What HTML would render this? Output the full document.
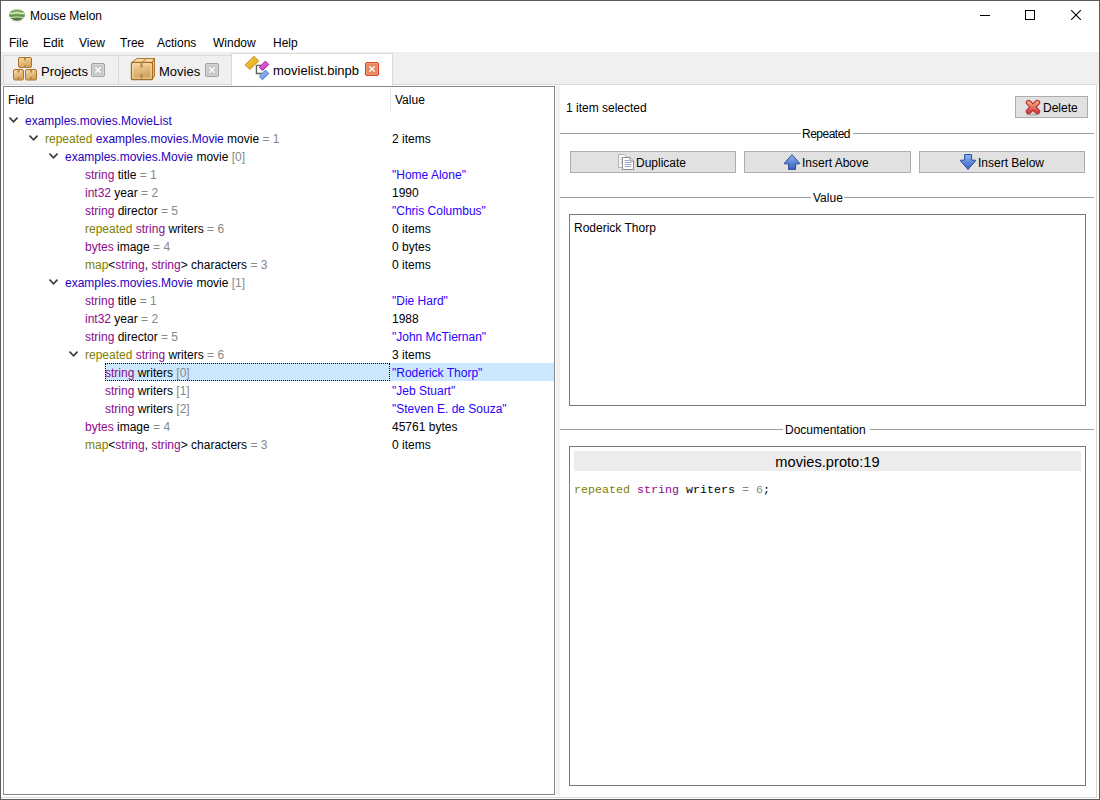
<!DOCTYPE html>
<html><head><meta charset="utf-8">
<style>
*{box-sizing:border-box;margin:0;padding:0}
html,body{width:1100px;height:800px;overflow:hidden;background:#fff}
body{font-family:"Liberation Sans",sans-serif;font-size:12px;color:#000;position:relative}
.a{position:absolute}
.t{position:absolute;white-space:pre;line-height:20px;height:18px}
#win{position:absolute;left:0;top:0;width:1100px;height:800px;border:1px solid #5c5c5c;background:#fff}
#tabbar{position:absolute;left:1px;top:52px;width:1098px;height:33px;background:#f0f0f0}
.tab{position:absolute;top:55px;height:29px;background:#f0f0f0;border:1px solid #d9d9d9;border-bottom:none}
.tab.act{top:53px;height:33px;background:#fff}
.cls{position:absolute;width:14px;height:14px;border:1px solid #a2a2a2;background:#c9c9c9;border-radius:2px;box-shadow:inset 0 0 0 1px #d4d4d4}
.pane{position:absolute;left:1px;top:84px;width:1096px;height:714px;border:1px solid #d9d9d9;border-left:none;background:#fff}
#tree{position:absolute;left:3px;top:86px;width:552px;height:709px;border:1px solid #828790;background:#fff;overflow:hidden}
.row{position:absolute;left:0;width:550px;height:18px}
.ty{color:#2800c0}
.kw{color:#808000}
.pr{color:#8b0b8b}
.gr{color:#888}
.sv{color:#2a00ff}
.btn{position:absolute;border:1px solid #adadad;background:#e1e1e1;height:22px}
.sep{position:absolute;height:1px;background:#a0a0a0}
.box{position:absolute;border:1px solid #7a7a7a;background:#fff}
</style></head><body>
<div id="win"></div>
<!-- title bar -->
<svg class="a" style="left:8px;top:8px" width="18" height="14" viewBox="0 0 18 14">
  <defs><linearGradient id="mg" x1="0" y1="0" x2="0" y2="1"><stop offset="0" stop-color="#b4d49a"/><stop offset="0.45" stop-color="#8ab86a"/><stop offset="1" stop-color="#3c6428"/></linearGradient></defs>
  <ellipse cx="9" cy="12.2" rx="5" ry="1.2" fill="#909090" opacity="0.5"/>
  <ellipse cx="9" cy="6.8" rx="8" ry="5.7" fill="url(#mg)"/>
  <path d="M3 3.6 Q9 1.8 15 3.6" stroke="#5c8c40" stroke-width="0.9" fill="none"/>
  <path d="M1.8 5.6 Q9 3.8 16.2 5.6" stroke="#e6f2dc" stroke-width="1" fill="none"/>
  <path d="M1.4 7.8 Q9 6.2 16.6 7.8" stroke="#5a8a3c" stroke-width="0.9" fill="none"/>
  <path d="M2.2 9.6 Q9 8.2 15.8 9.6" stroke="#d8ead0" stroke-width="0.9" fill="none"/>
</svg>
<div class="t" style="left:30px;top:6px">Mouse Melon</div>
<div class="a" style="left:980px;top:15px;width:10px;height:1px;background:#000"></div>
<div class="a" style="left:1025px;top:10px;width:10px;height:10px;border:1px solid #000"></div>
<svg class="a" style="left:1071px;top:10px" width="10" height="10" viewBox="0 0 10 10"><path d="M0 0L10 10M10 0L0 10" stroke="#000" stroke-width="1.1"/></svg>
<!-- menu -->
<div class="t" style="left:9px;top:33px">File</div>
<div class="t" style="left:43px;top:33px">Edit</div>
<div class="t" style="left:79px;top:33px">View</div>
<div class="t" style="left:120px;top:33px">Tree</div>
<div class="t" style="left:157px;top:33px">Actions</div>
<div class="t" style="left:213px;top:33px">Window</div>
<div class="t" style="left:273px;top:33px">Help</div>
<!-- tab bar -->
<div id="tabbar"></div>
<div class="pane"></div>
<div class="tab" style="left:3px;width:116px"></div>
<div class="tab" style="left:118px;width:114px"></div>
<div class="tab act" style="left:231px;width:162px"></div>
<div class="t" style="left:41px;top:62px;font-size:13px">Projects</div>
<div class="cls" style="left:91px;top:63px"><svg class="a" style="left:3px;top:3px" width="6" height="6"><path d="M0.3 0.3L5.7 5.7M5.7 0.3L0.3 5.7" stroke="#fff" stroke-width="1.4"/></svg></div>
<div class="t" style="left:159px;top:62px;font-size:13px">Movies</div>
<div class="cls" style="left:205px;top:63px"><svg class="a" style="left:3px;top:3px" width="6" height="6"><path d="M0.3 0.3L5.7 5.7M5.7 0.3L0.3 5.7" stroke="#fff" stroke-width="1.4"/></svg></div>
<div class="t" style="left:273px;top:61px;font-size:13px">movielist.binpb</div>
<div class="cls" style="left:365px;top:62px;border-color:#dc3c28;background:#e9885e;box-shadow:inset 0 0 0 1px #eba07c"><svg class="a" style="left:3px;top:3px" width="6" height="6"><path d="M0.3 0.3L5.7 5.7M5.7 0.3L0.3 5.7" stroke="#fff" stroke-width="1.4"/></svg></div>


<svg class="a" style="left:12px;top:56px" width="26" height="25" viewBox="0 0 26 25">
 <defs><linearGradient id="bx" x1="0" y1="0" x2="0.3" y2="1"><stop offset="0" stop-color="#fbdca8"/><stop offset="1" stop-color="#d4a460"/></linearGradient></defs>
 <rect x="6.5" y="1.5" width="13" height="10" rx="1.5" fill="url(#bx)" stroke="#a8742c"/>
 <rect x="1.5" y="13.5" width="10" height="10.5" rx="1.5" fill="url(#bx)" stroke="#a8742c"/>
 <rect x="13.5" y="13.5" width="11" height="10.5" rx="1.5" fill="url(#bx)" stroke="#a8742c"/>
 <path d="M13 2v2.5M13 9v2.5M6.5 14v2.5M6.5 21v2.5M19 14v2.5M19 21v2.5" stroke="#b58a4a" stroke-width="2"/>
</svg>
<svg class="a" style="left:130px;top:57px" width="27" height="24" viewBox="0 0 27 24">
 <defs><linearGradient id="bx2" x1="0" y1="0" x2="0.3" y2="1"><stop offset="0" stop-color="#fad8a2"/><stop offset="1" stop-color="#d1a05c"/></linearGradient></defs>
 <path d="M1.5 5.5L7 1.5H24.5L22 5.5Z" fill="#f8dcae" stroke="#b07424"/>
 <path d="M22 5.5L24.5 1.5V19L22 22.5Z" fill="#f0cf9c" stroke="#b07424"/>
 <rect x="1.5" y="5.5" width="21" height="17" rx="1" fill="url(#bx2)" stroke="#a86c1c" stroke-width="1.4"/>
 <path d="M2.8 6.8h18.4v14.4H2.8z" fill="none" stroke="#fff2dc" stroke-width="0.9" opacity="0.8"/>
 <path d="M11.5 6v4.5M11.5 17v4.5" stroke="#b08850" stroke-width="2.2"/>
 <path d="M11 5.5L17 1.5" stroke="#c89858" stroke-width="1.5"/>
</svg>
<svg class="a" style="left:242px;top:54px" width="30" height="30" viewBox="0 0 30 30">
 <defs>
  <linearGradient id="yl" x1="0" y1="0" x2="1" y2="1"><stop offset="0" stop-color="#f8d050"/><stop offset="1" stop-color="#e0a010"/></linearGradient>
  <linearGradient id="mg2" x1="0" y1="0" x2="1" y2="1"><stop offset="0" stop-color="#f070e8"/><stop offset="1" stop-color="#c830b8"/></linearGradient>
  <linearGradient id="bl" x1="0" y1="0" x2="1" y2="1"><stop offset="0" stop-color="#a8c8f8"/><stop offset="1" stop-color="#5a88d8"/></linearGradient>
 </defs>
 <path d="M14.4 11.3V19.5H20M14.4 11.3H19" stroke="#5c5c5c" stroke-width="1.3" fill="none"/>
 <path d="M12 2.3L16.7 6.9L7.9 15.4L3.2 10.9Z" fill="url(#yl)" stroke="#c88a10" stroke-width="1"/>
 <path d="M23.4 7.1L26.8 10.5L20.4 16.5L17.2 13.3Z" fill="url(#mg2)" stroke="#a02090" stroke-width="1"/>
 <path d="M23.4 16.1L26.8 19.5L20.4 25.7L17.2 22.5Z" fill="url(#bl)" stroke="#4a78c8" stroke-width="1"/>
</svg>

<!-- tree -->
<div id="tree">
  <div class="t" style="left:4px;top:3px">Field</div>
  <div class="a" style="left:386px;top:0;width:1px;height:24px;background:#e5e5e5"></div>
  <div class="t" style="left:391px;top:3px">Value</div>
</div>

<!-- ROWS -->
<svg class="a" style="left:9px;top:111px" width="12" height="18"><path d="M0.5 6.6L4.5 10.8L8.5 6.6" stroke="#3c3c3c" stroke-width="1.7" fill="none"/></svg>
<div class="t" style="left:25px;top:111px"><span class="ty">examples.movies.MovieList</span></div>
<svg class="a" style="left:29px;top:129px" width="12" height="18"><path d="M0.5 6.6L4.5 10.8L8.5 6.6" stroke="#3c3c3c" stroke-width="1.7" fill="none"/></svg>
<div class="t" style="left:45px;top:129px"><span class="kw">repeated</span> <span class="ty">examples.movies.Movie</span> movie <span class="gr">= 1</span></div>
<div class="t" style="left:392px;top:129px">2 items</div>
<svg class="a" style="left:49px;top:147px" width="12" height="18"><path d="M0.5 6.6L4.5 10.8L8.5 6.6" stroke="#3c3c3c" stroke-width="1.7" fill="none"/></svg>
<div class="t" style="left:65px;top:147px"><span class="ty">examples.movies.Movie</span> movie <span class="gr">[0]</span></div>
<div class="t" style="left:85px;top:165px"><span class="pr">string</span> title <span class="gr">= 1</span></div>
<div class="t" style="left:392px;top:165px"><span class="sv">"Home Alone"</span></div>
<div class="t" style="left:85px;top:183px"><span class="pr">int32</span> year <span class="gr">= 2</span></div>
<div class="t" style="left:392px;top:183px">1990</div>
<div class="t" style="left:85px;top:201px"><span class="pr">string</span> director <span class="gr">= 5</span></div>
<div class="t" style="left:392px;top:201px"><span class="sv">"Chris Columbus"</span></div>
<div class="t" style="left:85px;top:219px"><span class="kw">repeated</span> <span class="pr">string</span> writers <span class="gr">= 6</span></div>
<div class="t" style="left:392px;top:219px">0 items</div>
<div class="t" style="left:85px;top:237px"><span class="pr">bytes</span> image <span class="gr">= 4</span></div>
<div class="t" style="left:392px;top:237px">0 bytes</div>
<div class="t" style="left:85px;top:255px"><span class="kw">map</span>&lt;<span class="pr">string</span>, <span class="pr">string</span>&gt; characters <span class="gr">= 3</span></div>
<div class="t" style="left:392px;top:255px">0 items</div>
<svg class="a" style="left:49px;top:273px" width="12" height="18"><path d="M0.5 6.6L4.5 10.8L8.5 6.6" stroke="#3c3c3c" stroke-width="1.7" fill="none"/></svg>
<div class="t" style="left:65px;top:273px"><span class="ty">examples.movies.Movie</span> movie <span class="gr">[1]</span></div>
<div class="t" style="left:85px;top:291px"><span class="pr">string</span> title <span class="gr">= 1</span></div>
<div class="t" style="left:392px;top:291px"><span class="sv">"Die Hard"</span></div>
<div class="t" style="left:85px;top:309px"><span class="pr">int32</span> year <span class="gr">= 2</span></div>
<div class="t" style="left:392px;top:309px">1988</div>
<div class="t" style="left:85px;top:327px"><span class="pr">string</span> director <span class="gr">= 5</span></div>
<div class="t" style="left:392px;top:327px"><span class="sv">"John McTiernan"</span></div>
<svg class="a" style="left:69px;top:345px" width="12" height="18"><path d="M0.5 6.6L4.5 10.8L8.5 6.6" stroke="#3c3c3c" stroke-width="1.7" fill="none"/></svg>
<div class="t" style="left:85px;top:345px"><span class="kw">repeated</span> <span class="pr">string</span> writers <span class="gr">= 6</span></div>
<div class="t" style="left:392px;top:345px">3 items</div>
<div class="a" style="left:105px;top:363px;width:449px;height:18px;background:#cce8ff"></div>
<div class="a" style="left:105px;top:363px;width:285px;height:18px;border:1px dotted #000"></div>
<div class="t" style="left:105px;top:363px"><span class="pr">string</span> writers <span class="gr">[0]</span></div>
<div class="t" style="left:392px;top:363px"><span class="sv">"Roderick Thorp"</span></div>
<div class="t" style="left:105px;top:381px"><span class="pr">string</span> writers <span class="gr">[1]</span></div>
<div class="t" style="left:392px;top:381px"><span class="sv">"Jeb Stuart"</span></div>
<div class="t" style="left:105px;top:399px"><span class="pr">string</span> writers <span class="gr">[2]</span></div>
<div class="t" style="left:392px;top:399px"><span class="sv">"Steven E. de Souza"</span></div>
<div class="t" style="left:85px;top:417px"><span class="pr">bytes</span> image <span class="gr">= 4</span></div>
<div class="t" style="left:392px;top:417px">45761 bytes</div>
<div class="t" style="left:85px;top:435px"><span class="kw">map</span>&lt;<span class="pr">string</span>, <span class="pr">string</span>&gt; characters <span class="gr">= 3</span></div>
<div class="t" style="left:392px;top:435px">0 items</div>
<!-- /ROWS -->
<!-- splitter -->
<div class="a" style="left:556px;top:86px;width:4px;height:709px;background:#f0f0f0"></div>

<!-- right panel -->
<div class="t" style="left:566px;top:98px">1 item selected</div>
<div class="btn" style="left:1015px;top:96px;width:73px"></div>
<div class="t" style="left:1043px;top:98px">Delete</div>

<div class="sep" style="left:560px;top:133px;width:241px"></div>
<div class="t" style="left:802px;top:124px;letter-spacing:-0.5px">Repeated</div>
<div class="sep" style="left:853px;top:133px;width:241px"></div>

<div class="btn" style="left:570px;top:151px;width:166px"></div>
<div class="btn" style="left:744px;top:151px;width:167px"></div>
<div class="btn" style="left:919px;top:151px;width:166px"></div>
<div class="t" style="left:636px;top:153px">Duplicate</div>
<div class="t" style="left:802px;top:153px">Insert Above</div>
<div class="t" style="left:978px;top:153px">Insert Below</div>


<svg class="a" style="left:1024px;top:98px" width="18" height="19" viewBox="0 0 18 19">
 <defs><linearGradient id="xr" x1="0" y1="0" x2="0" y2="1"><stop offset="0" stop-color="#f4a57a"/><stop offset="1" stop-color="#d84848"/></linearGradient></defs>
 <ellipse cx="9" cy="16.6" rx="7" ry="1.2" fill="#8a8a8a" opacity="0.45"/>
 <path d="M4.6 4.6L13.4 13.4M13.4 4.6L4.6 13.4" stroke="#b83030" stroke-width="5.6" stroke-linecap="round"/>
 <path d="M4.6 4.6L13.4 13.4M13.4 4.6L4.6 13.4" stroke="url(#xr)" stroke-width="3.4" stroke-linecap="round"/>
</svg>
<svg class="a" style="left:617px;top:153px" width="18" height="18" viewBox="0 0 18 18">
 <path d="M1.5 1.5H7.5L10.5 4.5V14.5H1.5Z" fill="#f8f8f8" stroke="#b4b4b4"/>
 <path d="M3 4.5h4M3 6.5h5M3 8.5h5M3 10.5h5" stroke="#c8cce0" stroke-width="0.8"/>
 <path d="M5.5 4.5H13L16.5 8V16.5H5.5Z" fill="#fff" stroke="#8c8c8c"/>
 <path d="M13 4.5V8H16.5" fill="#e8e8e8" stroke="#8c8c8c"/>
 <path d="M7.5 7.5h4.5M7.5 9.5h7M7.5 11.5h7M7.5 13.5h7" stroke="#9aa2c8" stroke-width="0.9"/>
</svg>
<svg class="a" style="left:783px;top:153px" width="18" height="18" viewBox="0 0 18 18">
 <defs><linearGradient id="ar" x1="0" y1="0" x2="0" y2="1"><stop offset="0" stop-color="#90b4f4"/><stop offset="1" stop-color="#3560c0"/></linearGradient></defs>
 <path d="M9 1.6L16.6 10.2V10.8H12.6V16.4H5.6V10.8H1.4V10.2Z" fill="url(#ar)" stroke="#2c4d96" stroke-width="1" stroke-linejoin="round"/>
</svg>
<svg class="a" style="left:959px;top:153px" width="18" height="18" viewBox="0 0 18 18">
 <defs><linearGradient id="ar2" x1="0" y1="0" x2="0" y2="1"><stop offset="0" stop-color="#90b4f4"/><stop offset="1" stop-color="#3560c0"/></linearGradient></defs>
 <path d="M5.6 1.6H12.6V7.2H16.6V7.8L9 16.4L1.4 7.8V7.2H5.6Z" fill="url(#ar2)" stroke="#2c4d96" stroke-width="1" stroke-linejoin="round"/>
</svg>

<div class="sep" style="left:560px;top:197px;width:251px"></div>
<div class="t" style="left:813px;top:188px">Value</div>
<div class="sep" style="left:844px;top:197px;width:250px"></div>

<div class="box" style="left:569px;top:214px;width:517px;height:192px"></div>
<div class="t" style="left:574px;top:218px">Roderick Thorp</div>

<div class="sep" style="left:560px;top:429px;width:223px"></div>
<div class="t" style="left:785px;top:420px">Documentation</div>
<div class="sep" style="left:870px;top:429px;width:224px"></div>

<div class="box" style="left:569px;top:446px;width:517px;height:340px"></div>
<div class="a" style="left:574px;top:451px;width:507px;height:20px;background:#ececec"></div>
<div class="t" style="left:574px;top:452px;width:507px;text-align:center;font-size:14.67px">movies.proto:19</div>
<div class="t" style="left:574px;top:480px;font-family:'Liberation Mono',monospace;font-size:11.67px"><span class="kw">repeated</span> <span class="pr">string</span> writers <span class="gr">= 6</span>;</div>
</body></html>
